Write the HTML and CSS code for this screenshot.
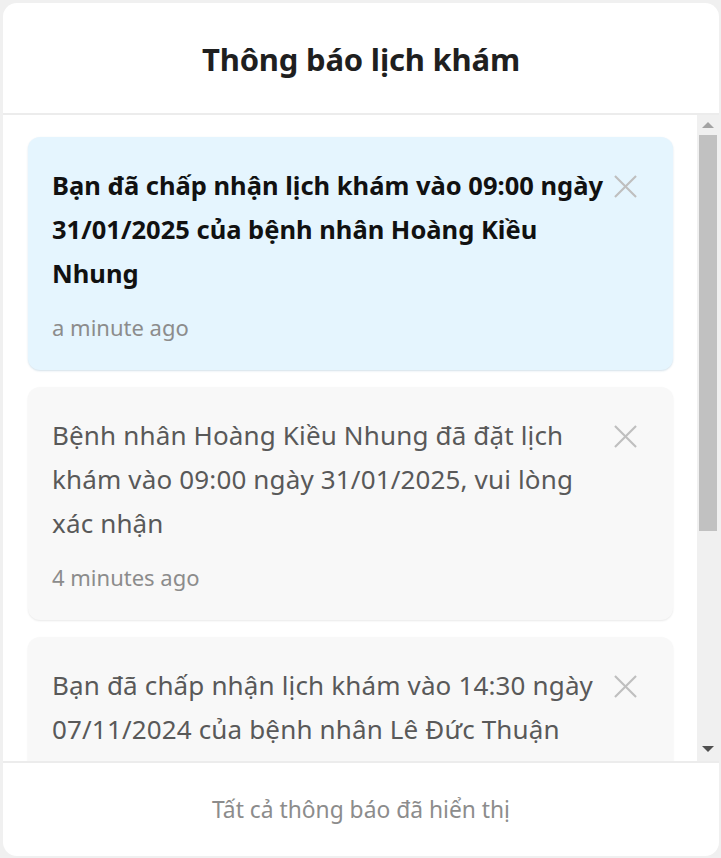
FILE: index.html
```html
<!DOCTYPE html>
<html lang="vi">
<head>
<meta charset="utf-8">
<title>Thông báo lịch khám</title>
<link rel="stylesheet" href="styles.css">
</head>
<body>
<div class="panel">
  <header class="panel-header">
    <h1 class="panel-title">Thông báo lịch khám</h1>
  </header>
  <div class="panel-body">
    <div class="notice-scroll">
      <ul class="notice-list">
        <li class="notice notice-unread">
          <div class="notice-main">
            <p class="notice-text">Bạn đã chấp nhận lịch khám vào 09:00 ngày 31/01/2025 của bệnh nhân Hoàng Kiều Nhung</p>
            <p class="notice-time">a minute ago</p>
          </div>
          <button class="notice-close" aria-label="Đóng">
            <svg viewBox="0 0 24 24" width="23" height="23"><path d="M1 1 L23 23 M23 1 L1 23" /></svg>
          </button>
        </li>
        <li class="notice">
          <div class="notice-main">
            <p class="notice-text">Bệnh nhân Hoàng Kiều Nhung đã đặt lịch khám vào 09:00 ngày 31/01/2025, vui lòng xác nhận</p>
            <p class="notice-time">4 minutes ago</p>
          </div>
          <button class="notice-close" aria-label="Đóng">
            <svg viewBox="0 0 24 24" width="23" height="23"><path d="M1 1 L23 23 M23 1 L1 23" /></svg>
          </button>
        </li>
        <li class="notice">
          <div class="notice-main">
            <p class="notice-text">Bạn đã chấp nhận lịch khám vào 14:30 ngày 07/11/2024 của bệnh nhân Lê Đức Thuận</p>
          </div>
          <button class="notice-close" aria-label="Đóng">
            <svg viewBox="0 0 24 24" width="23" height="23"><path d="M1 1 L23 23 M23 1 L1 23" /></svg>
          </button>
        </li>
      </ul>
    </div>
    <div class="scrollbar" aria-hidden="true">
      <div class="scroll-btn"><span class="arrow-up"></span></div>
      <div class="scroll-track"><div class="scroll-thumb"></div></div>
      <div class="scroll-btn"><span class="arrow-down"></span></div>
    </div>
  </div>
  <footer class="panel-footer">Tất cả thông báo đã hiển thị</footer>
</div>
</body>
</html>
```

FILE: styles.css
```css
* { box-sizing: border-box; }

html, body {
  margin: 0;
  padding: 0;
  height: 100%;
}

body {
  background: #f0f0f0;
  font-family: "Noto Sans", "Open Sans", sans-serif;
  padding: 3px 2px 2px 3px;
}

.panel {
  width: 716px;
  height: 853px;
  background: #ffffff;
  border-radius: 14px;
  display: flex;
  flex-direction: column;
  overflow: hidden;
}

.panel-header {
  height: 112px;
  flex: none;
  display: flex;
  align-items: center;
  justify-content: center;
  padding-top: 2px;
  border-bottom: 2px solid #ececec;
}

.panel-title {
  margin: 0;
  font-size: 31px;
  font-weight: 700;
  color: #1f1f1f;
  letter-spacing: -0.2px;
}

.panel-body {
  flex: 1;
  min-height: 0;
  display: flex;
}

.notice-scroll {
  flex: 1;
  min-width: 0;
  overflow: hidden;
}

.notice-list {
  list-style: none;
  margin: 0;
  padding: 22px 24px 22px 25px;
  display: flex;
  flex-direction: column;
  gap: 17px;
}

.notice {
  display: flex;
  align-items: flex-start;
  background: #f8f8f8;
  border-radius: 12px;
  padding: 26px 36px 25px 24px;
  box-shadow: 0 1px 2px rgba(0, 0, 0, 0.09);
}

.notice-unread {
  background: #e5f5fe;
  box-shadow: 0 1px 2px rgba(60, 120, 160, 0.22);
}

.notice-main {
  flex: 1;
  min-width: 0;
}

.notice-text {
  margin: 0;
  font-size: 26px;
  line-height: 44px;
  letter-spacing: 0.15px;
  color: #595959;
}

.notice-unread .notice-text {
  font-size: 25.5px;
  letter-spacing: 0;
  font-weight: 700;
  color: #111111;
}

.notice-time {
  margin: 14px 0 0;
  font-size: 22px;
  line-height: 36px;
  color: #8c8c8c;
}

.notice-close {
  flex: none;
  width: 23px;
  height: 23px;
  margin-top: 12px;
  margin-left: 4px;
  padding: 0;
  border: 0;
  background: transparent;
  display: block;
  cursor: pointer;
}

.notice-close svg {
  display: block;
  width: 23px;
  height: 23px;
  fill: none;
  stroke: #bfbfbf;
  stroke-width: 2.2;
}

.scrollbar {
  flex: none;
  width: 22px;
  background: #f0f0f0;
  display: flex;
  flex-direction: column;
}

.scroll-btn {
  flex: none;
  height: 20px;
  display: flex;
  align-items: center;
  justify-content: center;
}

.arrow-up {
  width: 0;
  height: 0;
  border-left: 6px solid transparent;
  border-right: 6px solid transparent;
  border-bottom: 6px solid #a3a3a3;
}

.arrow-down {
  width: 0;
  height: 0;
  border-left: 6px solid transparent;
  border-right: 6px solid transparent;
  border-top: 6px solid #505050;
  margin-top: -4px;
}

.scroll-track {
  flex: 1;
  padding: 0 2px;
}

.scroll-thumb {
  height: 396px;
  background: #c1c1c1;
}

.panel-footer {
  height: 95px;
  flex: none;
  border-top: 2px solid #ececec;
  display: flex;
  align-items: center;
  justify-content: center;
  font-size: 22.8px;
  color: #8c8c8c;
}
```
